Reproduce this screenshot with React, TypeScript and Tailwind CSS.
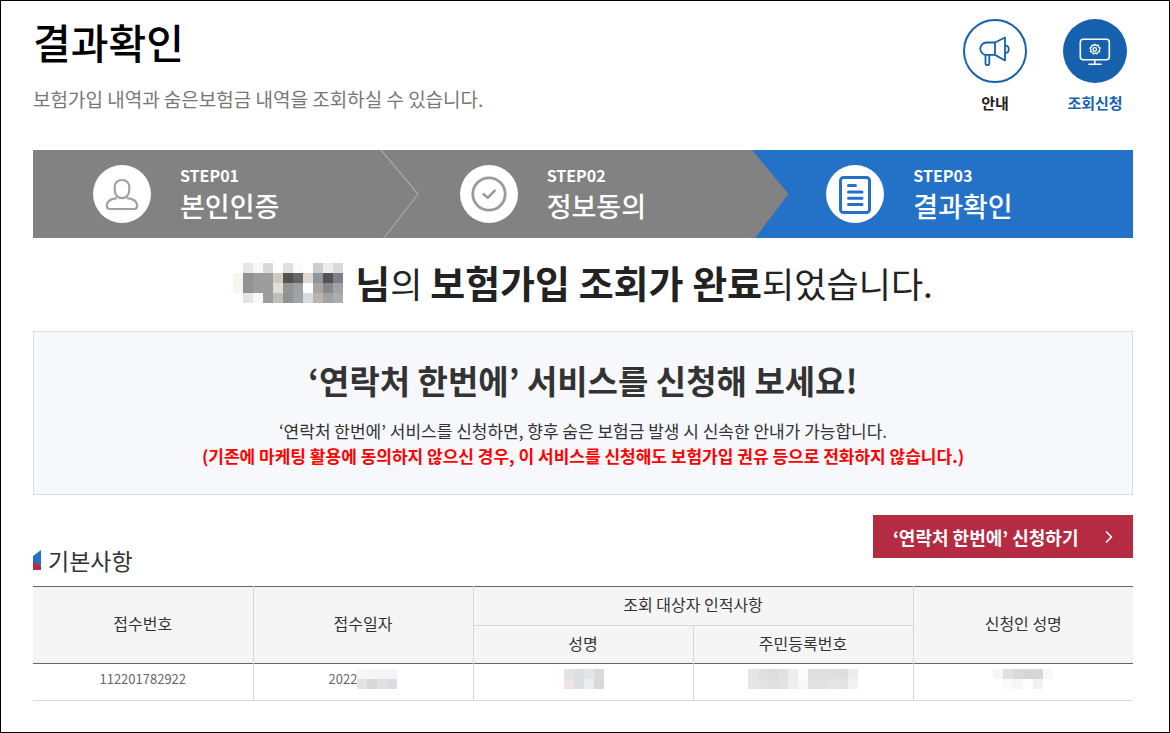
import type { ReactNode } from "react";
import { ChevronRight } from "lucide-react";

type Step = {
  no: string;
  title: string;
  icon: ReactNode;
};

const NAME_MASK = [
  ["", "#e5e5e5", "#f7f7f8", "#d9d9da", "", "#e1dedb", "#f5fbff", "", "#cdcdcc", "#ededed", "#d9d9d9"],
  ["#faf4ef", "#8f9492", "#9b9ca0", "#9f9d9b", "#cfcac4", "#53524d", "#666666", "#dfd9d6", "#8d949a", "#55534f", "#7c808c"],
  ["#faf4ef", "#8f9492", "#9b9ca0", "#9f9d9b", "#e2dcd8", "#949494", "#9fa1a5", "", "#a9a49d", "#87888b", "#a1a2a4"],
  ["", "#e4e4e4", "#f7f8fa", "#9f9d9b", "#bebeba", "#929292", "#a1a3a6", "#d9dbe1", "#b9b5ae", "#a0a1a3", "#aaacb1"],
];

const DATE_MASK = [
  ["#f7f7f7", "#f5f5f5", "#f5f5f5", "#f4f4f5"],
  ["#e3e3e3", "#d8d8d9", "#e1e1e1", "#dcdde2"],
];

const TARGET_MASK = [
  ["#fefdfb", "#e3e3e3", "#dddee3", "#e4e4e4", "#dadada"],
  ["#fefdfb", "#e9e6e4", "#dddee3", "#ececec", "#d8d9de"],
];

const RRN_MASK = [
  ["#e5e5e6", "#e0e0e0", "#dbdddd", "#e1e0e0", "#ededee", "#fcfcfc", "#dfdfe1", "#e0e0e0", "#dfdfdf", "#dcddde", "#ececec"],
  ["#e6e5e4", "#e3e3e4", "#e0e0e0", "#e3e3e3", "#efefef", "#f8f8f8", "#e2e2e2", "#e2e2e2", "#e6e5e3", "#e3e3e4", "#f2f2f2"],
];

const APPLICANT_MASK = [
  ["#f7f7f6", "#e1e0de", "#d8d9dc", "#d6d6d6", "#d6d6d6", "#f8f8fb"],
  ["", "#fafafa", "#f6f6f7", "#fdfdfd", "#f0f1f1", ""],
];

function Mosaic({ cells }: { cells: string[][] }) {
  const width = cells[0].length * 10;
  const height = cells.length * 10;

  return (
    <svg
      width={width}
      height={height}
      viewBox={`0 0 ${width} ${height}`}
      shapeRendering="crispEdges"
      aria-hidden="true"
      className="shrink-0"
    >
      {cells.map((row, y) =>
        row.map((fill, x) =>
          fill ? (
            <rect key={`${x}-${y}`} x={x * 10} y={y * 10} width="10" height="10" fill={fill} />
          ) : null
        )
      )}
    </svg>
  );
}

function MegaphoneIcon() {
  return (
    <svg width="32" height="32" viewBox="1 1 32 32" fill="none" stroke="#1661ae" strokeWidth="1.8" strokeLinejoin="round">
      <path d="M17 8.500H8.500a6.200 6.200 0 0 0 0 12.400H17" />
      <path d="M17 8.500 27 3.500v23L17 20.900z" />
      <path d="M27 11.300c5 .3 5 7.400 0 7.700" />
      <path d="M7.500 21v8.200a1.900 1.900 0 0 0 3.800 0V21" />
    </svg>
  );
}

function MonitorIcon() {
  return (
    <svg width="32" height="32" viewBox="0 0 32 32" fill="none" stroke="#fff" strokeWidth="1.600" strokeLinecap="round">
      <rect x="1.300" y="4.300" width="29" height="20.500" rx="3" />
      <path d="M15.800 25v4M10 29.200h12" />
      <path
        strokeWidth="1.300"
        strokeLinejoin="round"
        d="M15.800 9.300l1.400 1.200 1.900-.3.600 1.800 1.500 1.100-.9 1.600.4 1.900-1.900.5-.9 1.700-1.800-.7-1.800.7-.9-1.700-1.900-.5.400-1.900-.9-1.600 1.500-1.100.6-1.800 1.900.3z"
      />
      <circle cx="15.800" cy="14.500" r="1.800" strokeWidth="1.300" />
    </svg>
  );
}

function PersonIcon() {
  return (
    <svg width="58" height="58" viewBox="0 0 58 58" fill="none" stroke="#a0a1a5" strokeWidth="2.200" aria-hidden="true">
      <circle cx="29" cy="29" r="29" fill="#fff" stroke="none" />
      <path d="M29 15c4.500 0 7.300 2.900 7.300 7.600v2.200c0 4.600-2.800 8.300-7.300 8.300s-7.300-3.700-7.300-8.300v-2.200c0-4.700 2.800-7.600 7.300-7.600z" />
      <path d="M24 33.200c-6 .8-10.200 3.400-10.200 7.300v.6c0 1.800 1 2.900 2.900 2.900h24.600c1.900 0 2.900-1.100 2.900-2.900v-.6c0-3.900-4.200-6.500-10.200-7.300" />
    </svg>
  );
}

function CheckIcon() {
  return (
    <svg width="58" height="58" viewBox="0 0 58 58" fill="none" stroke="#9b9b9f" strokeLinecap="round" strokeLinejoin="round" aria-hidden="true">
      <circle cx="29" cy="29" r="29" fill="#fff" stroke="none" />
      <circle cx="29" cy="29" r="16.200" strokeWidth="2.800" />
      <path d="M23.700 29.200l4 3.700 7-7.300" strokeWidth="2.600" />
    </svg>
  );
}

function DocumentIcon() {
  return (
    <svg width="58" height="58" viewBox="0 0 58 58" fill="none" stroke="#2471c8" strokeLinecap="round" aria-hidden="true">
      <circle cx="29" cy="29" r="29" fill="#fff" stroke="none" />
      <rect x="14.500" y="12.500" width="29" height="35" rx="3" strokeWidth="3" />
      <path d="M22.500 20.500h7M22.500 27h13.500M22.500 33.300h13.500M22.500 39.500h13.500" strokeWidth="3" />
    </svg>
  );
}

const steps: Step[] = [
  { no: "STEP01", title: "본인인증", icon: <PersonIcon /> },
  { no: "STEP02", title: "정보동의", icon: <CheckIcon /> },
  { no: "STEP03", title: "결과확인", icon: <DocumentIcon /> },
];

function StepBar() {
  return (
    <ol className="mt-[35px] grid h-22 grid-cols-3 text-white">
      {steps.map((step, i) => (
        <li
          key={step.no}
          className={`relative flex items-center gap-[29px] pl-[60px] ${i === 2 ? "bg-[#2471c8]" : "bg-[#828282]"}`}
        >
          {step.icon}
          <div className="pt-[3px]">
            <p className="text-base leading-5 font-bold">{step.no}</p>
            <p className="text-[27px] leading-[41px] font-medium">{step.title}</p>
          </div>
          {i === 0 && (
            <svg className="absolute top-0 -right-5 z-10" width="40" height="88" viewBox="0 0 40 88" fill="none" aria-hidden="true">
              <path d="M1 0 38 44 4 88" stroke="#a8a8a8" strokeWidth="1.200" />
            </svg>
          )}
          {i === 1 && (
            <svg className="absolute top-0 -right-6 z-10" width="38" height="88" viewBox="0 0 38 88" aria-hidden="true">
              <path d="M0 0h38v88H0z" fill="#2471c8" />
              <path d="M0 0 36.500 44 3 88H0z" fill="#828282" />
            </svg>
          )}
        </li>
      ))}
    </ol>
  );
}

export default function App() {
  return (
    <div className="min-h-screen border border-black bg-white pr-9 pb-6 pl-8 font-['Noto_Sans_CJK_KR',sans-serif] text-[#333]">
      <header className="flex justify-between pt-[18px]">
        <div>
          <h1 className="text-[41px] leading-11 font-medium text-black">결과확인</h1>
          <p className="mt-5 text-[19px] leading-8 text-[#777]">
            보험가입 내역과 숨은보험금 내역을 조회하실 수 있습니다.
          </p>
        </div>
        <nav className="flex gap-7 pr-[2px] text-[15px] leading-[23px] font-bold">
          <a href="#guide" className="flex w-18 flex-col items-center gap-2 text-[#222]">
            <span className="flex size-16 items-center justify-center rounded-full border-2 border-[#1661ae]">
              <MegaphoneIcon />
            </span>
            안내
          </a>
          <a href="#apply" className="flex w-18 flex-col items-center gap-2 text-[#1661ae]">
            <span className="flex size-16 items-center justify-center rounded-full bg-[#1661ae]">
              <MonitorIcon />
            </span>
            조회신청
          </a>
        </nav>
      </header>

      <main>
        <StepBar />

        <div className="mt-[18px] flex items-center justify-center gap-3 text-[#222]">
          <Mosaic cells={NAME_MASK} />
          <p className="text-[35px] leading-[52px]">
            <strong className="text-[38px] font-bold">님</strong>의{" "}
            <strong className="text-[38px] font-bold">보험가입 조회가 완료</strong>되었습니다.
          </p>
        </div>

        <section className="mt-[22px] border border-[#dcdde0] bg-[#f6f8fc] px-4 pt-6 pb-[26px] text-center">
          <h2 className="text-[33px] leading-12 font-bold">‘연락처 한번에’ 서비스를 신청해 보세요!</h2>
          <p className="mt-[14px] text-[17px] leading-[25px]">
            ‘연락처 한번에’ 서비스를 신청하면, 향후 숨은 보험금 발생 시 신속한 안내가 가능합니다.
          </p>
          <p className="text-[17px] leading-[25px] font-bold text-[#f00]">
            (기존에 마케팅 활용에 동의하지 않으신 경우, 이 서비스를 신청해도 보험가입 권유 등으로 전화하지 않습니다.)
          </p>
        </section>

        <div className="mt-5 flex items-start justify-between">
          <h3 className="mt-7 flex items-center gap-[7px] text-[23px] leading-[34px]">
            <svg width="8" height="20" viewBox="0 0 8 20" aria-hidden="true">
              <path d="M8 0v16L0 12V6z" fill="#2471c8" />
              <path d="M0 11.500 8 15.500V20H0z" fill="#b52b41" />
            </svg>
            기본사항
          </h3>
          <button
            type="button"
            className="flex h-[43px] w-[260px] items-center justify-between bg-[#b52b41] pr-[14px] pl-5 text-lg font-bold text-white"
          >
            ‘연락처 한번에’ 신청하기
            <ChevronRight size={20} strokeWidth={2} aria-hidden="true" />
          </button>
        </div>

        <table className="mt-[9px] w-full table-fixed border-collapse border-y border-t-[#666] border-b-[#d9d9d9] text-center">
          <thead className="border-b border-[#666] bg-[#f5f5f5] text-base leading-6 [&_th]:pt-0 [&_th]:pb-1 [&_th]:font-normal">
            <tr className="h-[39px]">
              <th rowSpan={2} scope="col" className="border-r border-[#d9d9d9]">접수번호</th>
              <th rowSpan={2} scope="col" className="border-r border-[#d9d9d9]">접수일자</th>
              <th colSpan={2} scope="colgroup" className="border-r border-b border-[#d9d9d9]">조회 대상자 인적사항</th>
              <th rowSpan={2} scope="col">신청인 성명</th>
            </tr>
            <tr className="h-[38px]">
              <th scope="col" className="border-r border-[#d9d9d9]">성명</th>
              <th scope="col" className="border-r border-[#d9d9d9]">주민등록번호</th>
            </tr>
          </thead>
          <tbody>
            <tr className="h-[37px] text-[13px] leading-5 text-[#666] [&>td]:pb-[6px]">
              <td className="border-r border-[#d9d9d9]">112201782922</td>
              <td className="border-r border-[#d9d9d9]">
                <div className="flex items-center justify-center">
                  2022
                  <Mosaic cells={DATE_MASK} />
                </div>
              </td>
              <td className="border-r border-[#d9d9d9]">
                <div className="flex justify-center pr-2">
                  <Mosaic cells={TARGET_MASK} />
                </div>
              </td>
              <td className="border-r border-[#d9d9d9]">
                <div className="flex justify-center">
                  <Mosaic cells={RRN_MASK} />
                </div>
              </td>
              <td>
                <div className="flex justify-center">
                  <Mosaic cells={APPLICANT_MASK} />
                </div>
              </td>
            </tr>
          </tbody>
        </table>
      </main>
    </div>
  );
}
